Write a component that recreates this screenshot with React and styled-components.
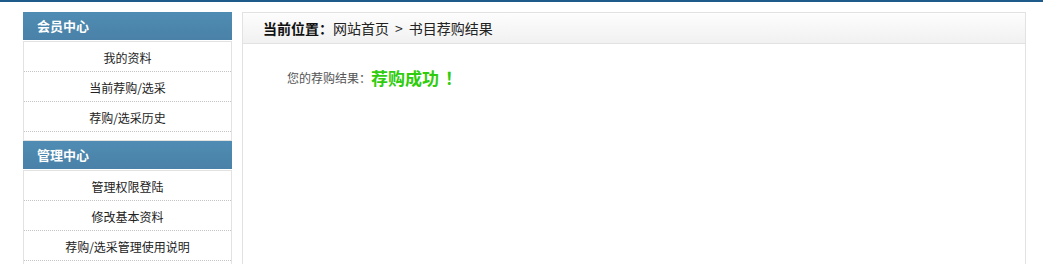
import React from 'react';
import styled, { createGlobalStyle } from 'styled-components';

const Global = createGlobalStyle`
  body {
    margin: 0;
    background: #fff;
    font-family: "Noto Sans CJK SC", "Liberation Sans", sans-serif;
    font-size: 12px;
    color: #333;
  }
`;

const TopLine = styled.div`
  height: 2px;
  background: #1e5b8a;
`;

const Page = styled.div`
  display: flex;
  gap: 10px;
  padding: 10px 0 0 23px;
`;

const Sidebar = styled.div`
  width: 209px;
  display: flex;
  flex-direction: column;
`;

const GroupTitle = styled.div`
  height: 28px;
  line-height: 28px;
  padding-left: 14px;
  background: linear-gradient(#4f8cb3, #4a81a8);
  color: #fff;
  font-size: 13px;
  font-weight: bold;
`;

const List = styled.div`
  margin-top: 1px;
  border: 1px solid #e2e2e2;
  padding-bottom: ${p => p.$pad || 0}px;
  display: flex;
  flex-direction: column;
`;

const Item = styled.a`
  box-sizing: border-box;
  height: 30px;
  padding-top: 3px;
  line-height: 26px;
  text-align: center;
  color: #222;
  text-decoration: none;
  border-bottom: 1px dotted #c4c4c4;
  font-size: 12px;
`;

const Main = styled.div`
  width: 782px;
  height: 300px;
  border: 1px solid #e2e2e2;
`;

const Crumb = styled.div`
  height: 30px;
  line-height: 30px;
  padding-left: 20px;
  background: linear-gradient(#fdfdfd, #f1f1f1);
  border-bottom: 1px solid #e2e2e2;
  font-size: 14px;
  color: #222;
  b {
    color: #111;
  }
`;

const Sep = styled.span`
  margin: 0 6px;
`;

const Result = styled.div`
  padding: 21px 0 0 44px;
  display: flex;
  align-items: center;
  color: #555;
  font-size: 12px;
`;

const Success = styled.span`
  color: #2fcc0c;
  font-size: 17px;
  font-weight: bold;
`;

const Bang = styled.span`
  margin-left: 6px;
`;

const groups = [
  { title: '会员中心', items: ['我的资料', '当前荐购/选采', '荐购/选采历史'], pad: 8 },
  { title: '管理中心', items: ['管理权限登陆', '修改基本资料', '荐购/选采管理使用说明'], pad: 8 },
];

export default function App() {
  return (
    <>
      <Global />
      <TopLine />
      <Page>
        <Sidebar>
          {groups.map(g => (
            <React.Fragment key={g.title}>
              <GroupTitle>{g.title}</GroupTitle>
              <List $pad={g.pad}>
                {g.items.map(i => (
                  <Item key={i} href="#">{i}</Item>
                ))}
              </List>
            </React.Fragment>
          ))}
        </Sidebar>
        <Main>
          <Crumb>
            <b>当前位置：</b>网站首页<Sep>&gt;</Sep>书目荐购结果
          </Crumb>
          <Result>
            您的荐购结果：<Success>荐购成功<Bang>！</Bang></Success>
          </Result>
        </Main>
      </Page>
    </>
  );
}
